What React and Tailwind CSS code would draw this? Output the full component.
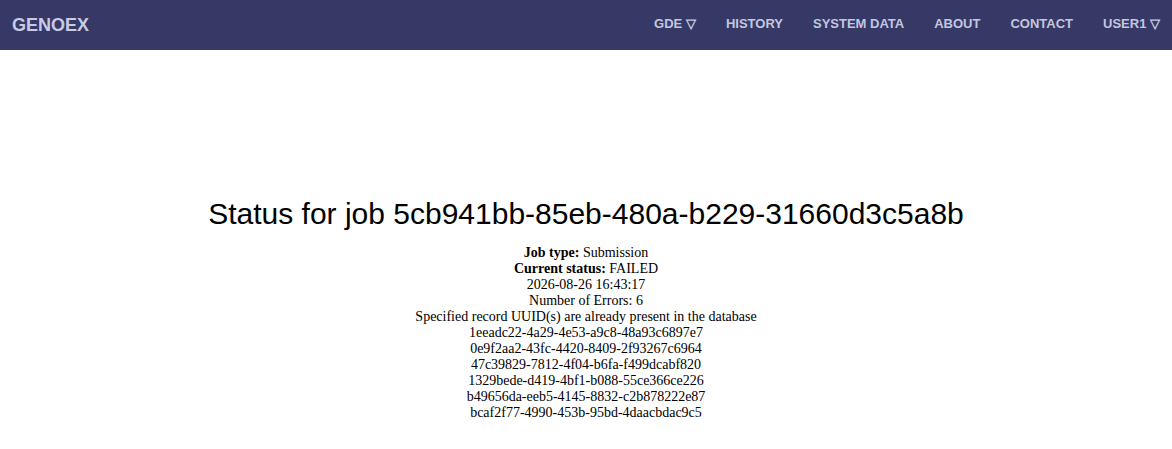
export default function App() {
  const nav = ["HISTORY", "SYSTEM DATA", "ABOUT", "CONTACT"];
  const uuids = [
    "1eeadc22-4a29-4e53-a9c8-48a93c6897e7",
    "0e9f2aa2-43fc-4420-8409-2f93267c6964",
    "47c39829-7812-4f04-b6fa-f499dcabf820",
    "1329bede-d419-4bf1-b088-55ce366ce226",
    "b49656da-eeb5-4145-8832-c2b878222e87",
    "bcaf2f77-4990-453b-95bd-4daacbdac9c5",
  ];
  return (
    <div className="min-h-[449px] bg-white">
      <header className="flex h-[50px] items-center justify-between bg-[#363966] pl-3 pr-3 font-['Liberation_Sans',Arial,sans-serif]">
        <div className="pt-px text-[18px] font-bold text-[#c9cbe6]">GENOEX</div>
        <nav className="flex items-center gap-[30px] pb-[2px] text-[13px] font-bold text-[#c3c6e0]">
          <span>GDE ▽</span>
          {nav.map((n) => (
            <span key={n}>{n}</span>
          ))}
          <span>USER1 ▽</span>
        </nav>
      </header>
      <main className="flex flex-col items-center pt-[147px] text-black">
        <h1 className="mb-[14px] font-['Liberation_Sans',Arial,sans-serif] text-[30px] leading-[34px]">
          Status for job 5cb941bb-85eb-480a-b229-31660d3c5a8b
        </h1>
        <div className="flex flex-col items-center font-['Liberation_Serif','Times_New_Roman',serif] text-[14px] leading-[16px]">
          <div>
            <b>Job type:</b> Submission
          </div>
          <div>
            <b>Current status:</b> FAILED
          </div>
          <div>2026-08-26 16:43:17</div>
          <div>Number of Errors: 6</div>
          <div>Specified record UUID(s) are already present in the database</div>
          {uuids.map((u) => (
            <div key={u}>{u}</div>
          ))}
        </div>
      </main>
    </div>
  );
}
